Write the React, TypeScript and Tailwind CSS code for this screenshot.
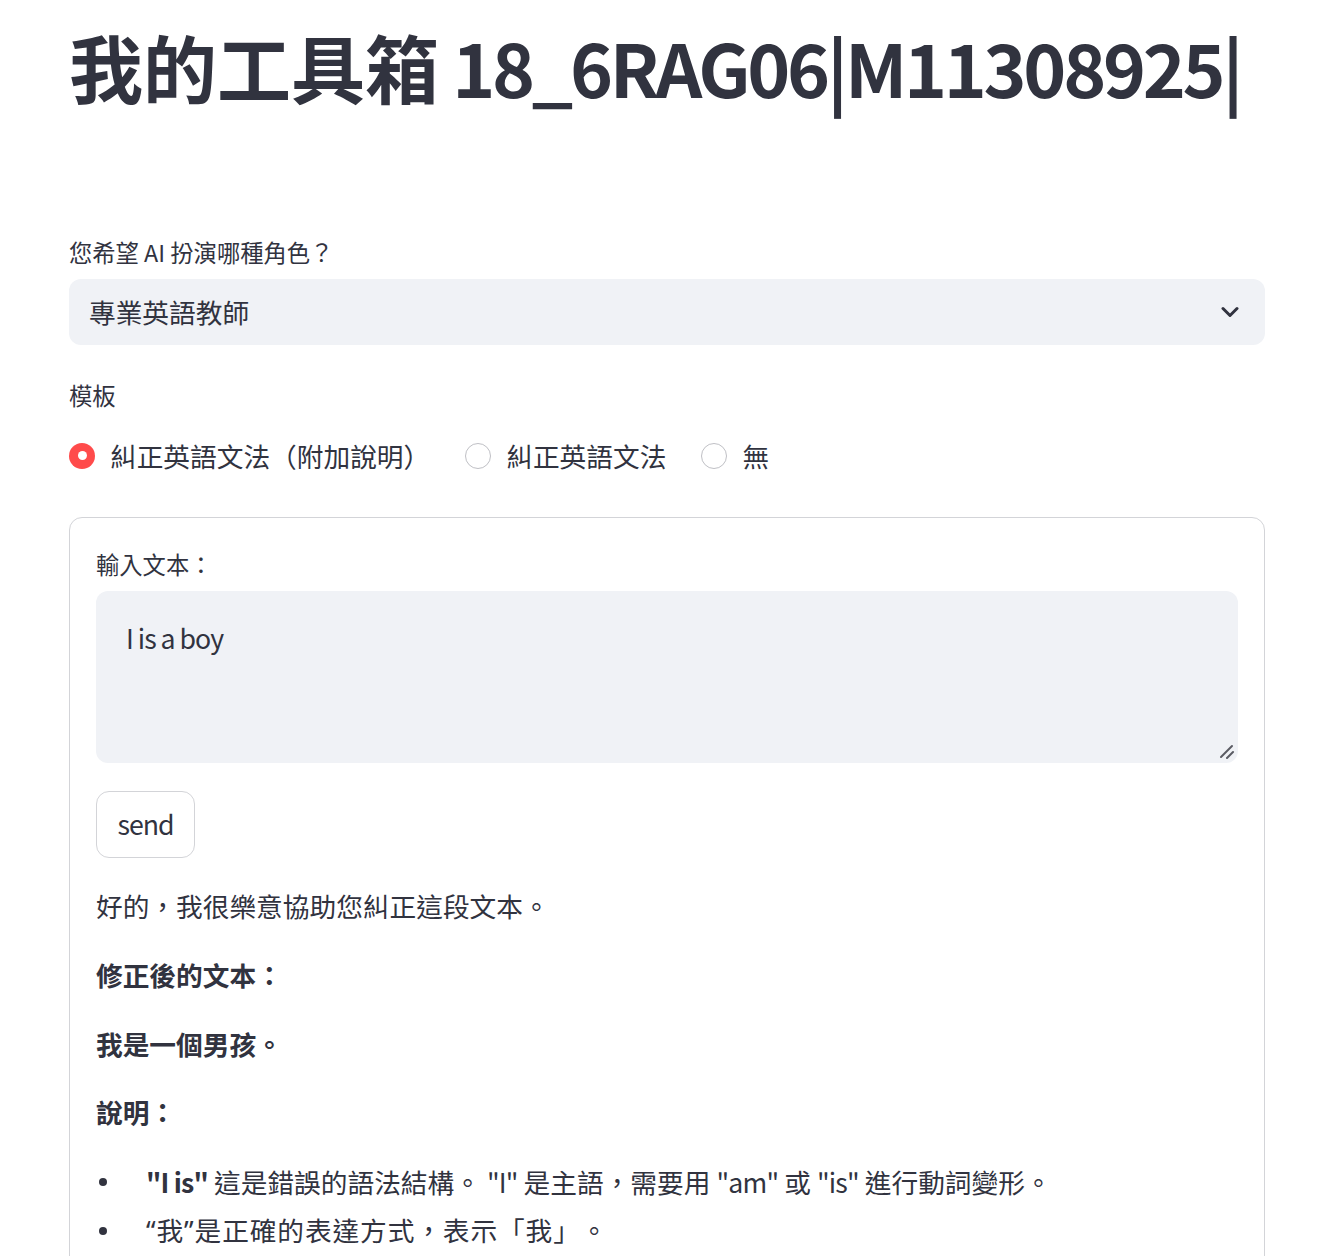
import React from "react";

const FONT = "'Noto Sans CJK TC', 'Noto Sans', sans-serif";

function Radio({ checked, label }: { checked?: boolean; label: string }) {
  return (
    <div className="flex items-center">
      {checked ? (
        <span className="flex h-[26px] w-[26px] items-center justify-center rounded-full bg-[#ff4b4b]">
          <span className="h-[9px] w-[9px] rounded-full bg-white" />
        </span>
      ) : (
        <span className="h-[26px] w-[26px] rounded-full border-[1.5px] border-[#bfc0c5] bg-white" />
      )}
      <span className="ml-[15px] text-[26.7px] leading-none">{label}</span>
    </div>
  );
}

function Bullet({ children, className = "" }: { children: React.ReactNode; className?: string }) {
  return (
    <li className={`flex items-center ${className}`}>
      <span className="flex w-[50px] shrink-0 items-center">
        <span className="ml-[3px] h-[8px] w-[8px] rounded-full bg-[#31333f]" />
      </span>
      <span>{children}</span>
    </li>
  );
}

export default function App() {
  return (
    <div
      className="min-h-screen bg-white text-[#31333f] [text-spacing-trim:space-all]"
      style={{ fontFamily: FONT }}
    >
      <div className="pl-[69px] pr-[75px]">
        <h1 className="mt-[22px] h-[88px] whitespace-nowrap font-bold leading-[88px]">
          <span className="text-[74px]">我的工具箱</span>
          <span className="text-[73px] tracking-[-3.3px]"> 18_6RAG06|M11308925|</span>
        </h1>

        <div className="mt-[122px] flex h-[40px] items-center text-[23.3px]">
          您希望 AI 扮演哪種角色？
        </div>
        <div className="mt-[7px] flex h-[66px] items-center justify-between rounded-[12px] bg-[#f0f2f6] pl-[20px] pr-[26px]">
          <span className="text-[26.7px]">專業英語教師</span>
          <svg width="18" height="12" viewBox="0 0 18 12" fill="none" stroke="#31333f" strokeWidth="3" strokeLinecap="round" strokeLinejoin="round">
            <path d="M2 2.5l7 7 7-7" />
          </svg>
        </div>

        <div className="mt-[30px] flex h-[40px] items-center text-[23.3px]">模板</div>
        <div className="mt-[7px] flex h-[68px] items-center gap-[35px]">
          <Radio checked label="糾正英語文法（附加說明）" />
          <Radio label="糾正英語文法" />
          <Radio label="無" />
        </div>

        <div className="mt-[27px] rounded-[13px] border-[1.5px] border-[#d3d4d8] p-[26px]">
          <div className="flex h-[40px] items-center text-[23.3px]">輸入文本：</div>
          <div className="relative mt-[7px]">
            <textarea
              readOnly
              defaultValue="I is a boy"
              className="block h-[172px] w-full resize-none rounded-[12px] bg-[#f0f2f6] px-[30px] py-[26px] text-[26.7px] leading-[42.7px] tracking-[-1px] text-[#31333f] outline-none"
              style={{ fontFamily: FONT }}
            />
            <svg
              className="pointer-events-none absolute bottom-[4px] right-[3px]"
              width="16"
              height="16"
              viewBox="0 0 16 16"
              fill="none"
              stroke="#5a5b63"
              strokeWidth="2"
              strokeLinecap="round"
            >
              <path d="M2 14L13 3" />
              <path d="M8 15L14 9" />
            </svg>
          </div>
          <button
            className="mt-[28px] flex h-[67px] w-[99px] items-center justify-center rounded-[13px] border-[1.5px] border-[#d3d4d8] bg-white text-[26.7px] tracking-[-1px] text-[#31333f]"
            style={{ fontFamily: FONT }}
          >
            send
          </button>

          <p className="mt-[26.7px] text-[26.7px] leading-[42.7px]">好的，我很樂意協助您糾正這段文本。</p>
          <p className="mt-[26.7px] text-[26.7px] font-bold leading-[42.7px]">修正後的文本：</p>
          <p className="mt-[26.7px] text-[26.7px] font-bold leading-[42.7px]">我是一個男孩。</p>
          <p className="mt-[25px] text-[26.7px] font-bold leading-[42.7px]">說明：</p>
          <ul className="mt-[27px] text-[26.7px] leading-[42.7px]">
            <Bullet>
              <strong className="font-bold tracking-[-0.8px]">"I is"</strong> 這是錯誤的語法結構。{" "}
              <span className="tracking-[-0.8px]">"I"</span> 是主語，需要用{" "}
              <span className="tracking-[-0.8px]">"am"</span> 或{" "}
              <span className="tracking-[-0.8px]">"is"</span> 進行動詞變形。
            </Bullet>
            <Bullet className="mt-[5.3px]">
              <span className="tracking-[0.9px]">
                <span style={{ fontFamily: "'Noto Sans', sans-serif" }}>“</span>我
                <span style={{ fontFamily: "'Noto Sans', sans-serif" }}>”</span>是正確的表達方式，表示「我」。
              </span>
            </Bullet>
          </ul>
          <div className="h-[40px]" />
        </div>
      </div>
    </div>
  );
}
